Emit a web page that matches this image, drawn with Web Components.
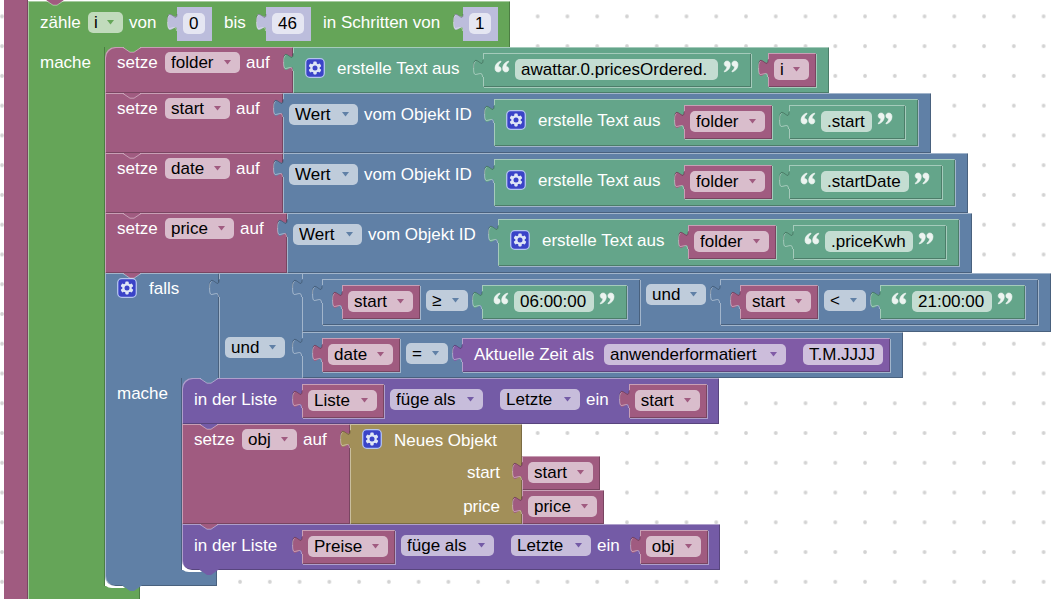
<!DOCTYPE html>
<html lang="de">
<head>
<meta charset="utf-8">
<title>Blockeditor</title>
<style>
  :root {
    --loop: #65a558; --variable: #a05b80; --text: #64a58a; --logic: #6080a6;
    --list: #745ba6; --time: #805ba6; --object: #a28f59; --number: #bcbddc;
    --light: rgba(255,255,255,.42); --dark: rgba(0,0,0,.24);
  }
  html, body { margin: 0; height: 100%; overflow: hidden; background: #fff; }
  body { font: 17px/21px "Liberation Sans", Arial, sans-serif; color: #fff; }

  /* horizontal rhythm between the parts of a block */
  bl-label, bl-select, bl-field, bl-quote { margin-left: 6px; }
  bl-gear { margin-left: 12px; }
  bl-label:first-child, bl-quote:first-child, bl-gear + bl-label, bl-value + bl-label { margin-left: 12px; }
  bl-value { margin-left: 20px; }
  bl-select + bl-value { margin-left: 14px; }
  bl-value + bl-value { margin-left: 17px; }
  bl-value[slot] { margin-left: 0; }
  .apart { margin-left: 17px; }

  /* shared widths */
  .w22 { --w: 22px; } .w25 { --w: 25px; } .w28 { --w: 28px; } .w32 { --w: 32px; }
  .w35 { --w: 35px; } .w42 { --w: 42px; } .w48 { --w: 48px; } .w51 { --w: 51px; }
  .w55 { --w: 55px; } .w60 { --w: 60px; } .w65 { --w: 65px; } .w69 { --w: 69px; }
  .w75 { --w: 75px; } .w80 { --w: 80px; } .w88 { --w: 88px; } .w93 { --w: 93px; }
  .w106 { --w: 106px; } .w110 { --w: 110px; } .w120 { --w: 120px; } .w124 { --w: 124px; }
  .w126 { --w: 126px; } .w182 { --w: 182px; } .w203 { --w: 203px; }
  .second { grid-row: 2; }
  .key { grid-column: 2; margin-top: 6px; }
</style>
</head>
<body>
<bl-workspace>
  <bl-rail color="variable">
    <bl-loop color="loop" after="variable" last>
      <bl-label class="w42">zähle</bl-label>
      <bl-select class="w35" value="i"></bl-select>
      <bl-label class="w28">von</bl-label>
      <bl-value color="number"><bl-field class="w22" value="0"></bl-field></bl-value>
      <bl-label class="w22">bis</bl-label>
      <bl-value color="number"><bl-field class="w32" value="46"></bl-field></bl-value>
      <bl-label class="w120">in Schritten von</bl-label>
      <bl-value color="number"><bl-field class="w22" value="1"></bl-field></bl-value>
      <bl-label slot="do">mache</bl-label>

      <bl-statement slot="body" color="variable" after="loop" first>
        <bl-label class="w42">setze</bl-label><bl-select class="w75" value="folder"></bl-select><bl-label class="w25">auf</bl-label>
        <bl-value slot="value" color="text" inline>
          <bl-gear></bl-gear><bl-label class="w126">erstelle Text aus</bl-label>
          <bl-value color="text" quoted nested><bl-quote></bl-quote><bl-field class="w203" value="awattar.0.pricesOrdered."></bl-field><bl-quote closing></bl-quote></bl-value>
          <bl-value color="variable" nested><bl-select class="w35" value="i"></bl-select></bl-value>
        </bl-value>
      </bl-statement>

      <bl-statement slot="body" color="variable" after="variable">
        <bl-label class="w42">setze</bl-label><bl-select class="w65" value="start"></bl-select><bl-label class="w25">auf</bl-label>
        <bl-value slot="value" color="logic" inline tall>
          <bl-select class="w69" value="Wert"></bl-select><bl-label class="w110">vom Objekt ID</bl-label>
          <bl-value color="text" inline tall nested>
            <bl-gear></bl-gear><bl-label class="w126">erstelle Text aus</bl-label>
            <bl-value color="variable" nested><bl-select class="w75" value="folder"></bl-select></bl-value>
            <bl-value color="text" quoted nested><bl-quote></bl-quote><bl-field class="w51" value=".start"></bl-field><bl-quote closing></bl-quote></bl-value>
          </bl-value>
        </bl-value>
      </bl-statement>

      <bl-statement slot="body" color="variable" after="variable">
        <bl-label class="w42">setze</bl-label><bl-select class="w65" value="date"></bl-select><bl-label class="w25">auf</bl-label>
        <bl-value slot="value" color="logic" inline tall>
          <bl-select class="w69" value="Wert"></bl-select><bl-label class="w110">vom Objekt ID</bl-label>
          <bl-value color="text" inline tall nested>
            <bl-gear></bl-gear><bl-label class="w126">erstelle Text aus</bl-label>
            <bl-value color="variable" nested><bl-select class="w75" value="folder"></bl-select></bl-value>
            <bl-value color="text" quoted nested><bl-quote></bl-quote><bl-field class="w88" value=".startDate"></bl-field><bl-quote closing></bl-quote></bl-value>
          </bl-value>
        </bl-value>
      </bl-statement>

      <bl-statement slot="body" color="variable" after="variable">
        <bl-label class="w42">setze</bl-label><bl-select class="w69" value="price"></bl-select><bl-label class="w25">auf</bl-label>
        <bl-value slot="value" color="logic" inline tall>
          <bl-select class="w69" value="Wert"></bl-select><bl-label class="w110">vom Objekt ID</bl-label>
          <bl-value color="text" inline tall nested>
            <bl-gear></bl-gear><bl-label class="w126">erstelle Text aus</bl-label>
            <bl-value color="variable" nested><bl-select class="w75" value="folder"></bl-select></bl-value>
            <bl-value color="text" quoted nested><bl-quote></bl-quote><bl-field class="w88" value=".priceKwh"></bl-field><bl-quote closing></bl-quote></bl-value>
          </bl-value>
        </bl-value>
      </bl-statement>

      <bl-loop slot="body" color="logic" after="variable" external last>
        <bl-gear></bl-gear><bl-label class="w48">falls</bl-label>
        <bl-value slot="value" color="logic" join>
          <bl-select class="w60 second" value="und"></bl-select>
          <bl-value slot="input" color="logic" inline tall>
            <bl-value color="logic" inline nested>
              <bl-value color="variable" nested><bl-select class="w65" value="start"></bl-select></bl-value>
              <bl-select class="w42" value="≥"></bl-select>
              <bl-value color="text" quoted nested><bl-quote></bl-quote><bl-field class="w80" value="06:00:00"></bl-field><bl-quote closing></bl-quote></bl-value>
            </bl-value>
            <bl-select class="w60" value="und"></bl-select>
            <bl-value color="logic" inline nested>
              <bl-value color="variable" nested><bl-select class="w65" value="start"></bl-select></bl-value>
              <bl-select class="w42" value="&lt;"></bl-select>
              <bl-value color="text" quoted nested><bl-quote></bl-quote><bl-field class="w80" value="21:00:00"></bl-field><bl-quote closing></bl-quote></bl-value>
            </bl-value>
          </bl-value>
          <bl-value slot="input" color="logic" inline>
            <bl-value color="variable" nested><bl-select class="w65" value="date"></bl-select></bl-value>
            <bl-select class="w42" value="="></bl-select>
            <bl-value color="time" nested>
              <bl-label class="w124">Aktuelle Zeit als</bl-label><bl-select class="w182" value="anwenderformatiert"></bl-select><bl-field class="w80 apart" value="T.M.JJJJ"></bl-field>
            </bl-value>
          </bl-value>
        </bl-value>
        <bl-label slot="do">mache</bl-label>

        <bl-statement slot="body" color="list" after="logic" inline first>
          <bl-label class="w88">in der Liste</bl-label>
          <bl-value color="variable" nested><bl-select class="w69" value="Liste"></bl-select></bl-value>
          <bl-select class="w93" value="füge als"></bl-select><bl-select class="w80 apart" value="Letzte"></bl-select>
          <bl-label>ein</bl-label>
          <bl-value color="variable" nested><bl-select class="w65" value="start"></bl-select></bl-value>
        </bl-statement>

        <bl-statement slot="body" color="variable" after="list">
          <bl-label class="w42">setze</bl-label><bl-select class="w55" value="obj"></bl-select><bl-label class="w25">auf</bl-label>
          <bl-value slot="value" color="object" rows>
            <bl-gear></bl-gear><bl-label class="w106 key">Neues Objekt</bl-label>
            <bl-label class="key">start</bl-label>
            <bl-label class="key">price</bl-label>
            <bl-value slot="input" color="variable"><bl-select class="w65" value="start"></bl-select></bl-value>
            <bl-value slot="input" color="variable"><bl-select class="w69" value="price"></bl-select></bl-value>
          </bl-value>
        </bl-statement>

        <bl-statement slot="body" color="list" after="variable" inline last>
          <bl-label class="w88">in der Liste</bl-label>
          <bl-value color="variable" nested><bl-select class="w80" value="Preise"></bl-select></bl-value>
          <bl-select class="w93" value="füge als"></bl-select><bl-select class="w80 apart" value="Letzte"></bl-select>
          <bl-label>ein</bl-label>
          <bl-value color="variable" nested><bl-select class="w55" value="obj"></bl-select></bl-value>
        </bl-statement>
      </bl-loop>
    </bl-loop>
  </bl-rail>
</bl-workspace>

<script>
const COLORS = ['loop', 'variable', 'text', 'logic', 'list', 'time', 'object', 'number'];
const colorRules = COLORS.map(c =>
  `:host([color=${c}]){--c:var(--${c})} :host([after=${c}]){--above:var(--${c})}`).join('');

const baseRules = `
  * { box-sizing: border-box; }
  :host { position: relative; box-sizing: border-box; }
  .main {
    display: flex; align-items: flex-start; background: var(--c);
    box-shadow: inset 1px 1px var(--light), inset -1px -1px var(--dark);
  }
  svg { display: block; }
  .notch { position: absolute; z-index: 2; top: 0; left: 17px; width: 20px; height: 6px; fill: var(--above); }
  .bump { position: absolute; z-index: 2; top: 100%; left: 17px; width: 20px; height: 6px; margin-top: -1px; fill: var(--c); }
  .corner { position: absolute; z-index: 1; top: 100%; left: 0; width: 20px; height: 2px; fill: #fff; }
  path.edge { fill: none; stroke: rgba(255,255,255,.42); }
`;

const NOTCH = `<svg class="notch" viewBox="0 0 20 6" aria-hidden="true"><path d="M1 0L8 5H12L19 0Z"/><path class="edge" d="M1 .5L8 5.2H12L19 .5"/></svg>`;
const LOWER = `<svg class="corner" viewBox="0 0 20 2" aria-hidden="true"><path d="M1 0H18L20 2H7Q3 2 1 0Z"/></svg>
  <svg class="bump" viewBox="0 0 20 6" aria-hidden="true"><path d="M0 0H20L19 1L12 6H8L1 1Z"/></svg>`;

class Part extends HTMLElement {
  render(css, html) {
    if (this.shadowRoot) return;
    this.attachShadow({ mode: 'open' }).innerHTML = `<style>${baseRules}${colorRules}${css}</style>${html}`;
  }
}

/* white canvas with a dotted grid */
customElements.define('bl-workspace', class extends Part {
  connectedCallback() {
    this.render(`
      :host { display: block; height: 100%; overflow: hidden; padding-left: 4px; }
      .dots { position: absolute; inset: 0; width: 100%; height: 100%; }
    `, `<svg class="dots" aria-hidden="true">
        <defs><pattern id="grid" width="29.76" height="29.76" x="-12.9" y="1.5" patternUnits="userSpaceOnUse">
          <circle cx="14.9" cy="14.9" r="1.9" fill="#d2d2d2"/></pattern></defs>
        <rect width="100%" height="100%" fill="url(#grid)"/></svg><slot></slot>`);
  }
});

/* left arm of an enclosing block that continues beyond the view */
customElements.define('bl-rail', class extends Part {
  connectedCallback() {
    this.render(`
      :host { display: flex; align-items: flex-start; min-height: 100%; }
      .arm { width: 24px; align-self: stretch; background: var(--c); box-shadow: inset -1px 0 var(--dark); }
    `, `<div class="arm"></div><slot></slot>`);
  }
});

/* block with a header, an indented statement stack and a foot */
customElements.define('bl-loop', class extends Part {
  connectedCallback() {
    this.render(`
      :host { display: block; width: max-content; }
      :host(:not([external])) { padding-top: 1px; }
      .head { display: flex; width: max-content; }
      .main { min-height: 46px; padding: 6px 12px 6px 0; box-shadow: inset 1px 1px var(--light), inset -1px 0 var(--dark); }
      :host([external]) .main { padding: 0 22px 0 0; }
      .body { display: flex; }
      .arm { min-width: 77px; background: var(--c); display: flex; align-items: flex-start; box-shadow: inset 1px 0 var(--light), inset -1px 0 var(--dark); }
      .stack { display: flex; flex-direction: column; align-items: flex-start; position: relative; z-index: 1; }
      .foot { position: relative; width: 112px; height: 16px; background: var(--c); box-shadow: inset 1px 0 var(--light), inset -1px -1px var(--dark); }
      :host([external]) .foot { border-bottom-left-radius: 10px; }
    `, `${NOTCH}<div class="head"><div class="main"><slot></slot></div><slot name="value"></slot></div>
        <div class="body"><div class="arm"><slot name="do"></slot></div><div class="stack"><slot name="body"></slot></div></div>
        <div class="foot"></div>${this.hasAttribute('last') ? LOWER : ''}`);
  }
});

/* one statement, optionally with a value block plugged into its right edge */
customElements.define('bl-statement', class extends Part {
  connectedCallback() {
    this.render(`
      :host { display: flex; }
      .main { padding-right: 22px; }
      :host([inline]) .main { padding: 6px 12px 6px 0; }
      :host([first]) .main { border-top-left-radius: 10px; }
      :host([last]) .main { border-bottom-left-radius: 10px; }
      :host([first])::before { content: ""; position: absolute; z-index: -1; top: 0; left: 0; width: 10px; height: 10px; background: var(--above); }
    `, `${NOTCH}<div class="main"><slot></slot></div><slot name="value"></slot>${this.hasAttribute('last') ? LOWER : ''}`);
  }
});

/* value block with a puzzle tab on its left edge */
customElements.define('bl-value', class extends Part {
  connectedCallback() {
    this.render(`
      :host { display: flex; }
      .main { min-height: 34px; padding: 1px 7px 0 0; }
      .tab { position: absolute; z-index: 1; left: -10px; top: 6px; width: 12px; height: 18px; fill: var(--c); overflow: visible; }
      .tab .lit { fill: none; stroke: var(--light); stroke-width: 1; }
      .tab .shade { fill: none; stroke: var(--dark); stroke-width: 1; }
      :host([nested]) { box-shadow: 1px 1px var(--light); }
      :host([quoted]) .main { padding-right: 13px; }
      :host([inline]) .main { padding: 6px 13px 6px 0; }
      :host([inline][tall]) .main { padding-bottom: 7px; }
      :host([color=number]) .main { box-shadow: none; }
      :host([join]) .main { display: grid; grid-template: 59px 46px / 83px; justify-items: start; padding: 0; box-shadow: inset 1px 1px var(--light); }
      :host([rows]) .main { display: grid; grid-template: 32px 34px 34px / 32px 118px; padding: 0 22px 0 0; justify-items: end; }
      :host([rows]) .stack { padding-top: 32px; }
      .stack { display: flex; flex-direction: column; align-items: flex-start; }
    `, `<div class="main"><slot></slot></div><div class="stack"><slot name="input"></slot></div>
        <svg class="tab" viewBox="0 0 12 18" aria-hidden="true">
          <path d="M12 0H10C10 12 .5 -9.500 .5 9S10 6 10 18H12Z"/>
          <path class="shade" d="M10 1C10 12 .5 -9 .5 9"/>
          <path class="lit" d="M2.500 2.500C.6 4 .6 6 .6 9C.6 13 1 15.500 2.500 15.500C6 15.200 9.500 12.500 9.500 18"/>
        </svg>`);
  }
});

customElements.define('bl-label', class extends Part {
  connectedCallback() {
    this.render(`:host { display: block; min-width: var(--w, 0); margin-top: 5px; white-space: nowrap; }`, `<slot></slot>`);
  }
});

customElements.define('bl-select', class extends Part {
  connectedCallback() {
    const value = this.getAttribute('value');
    this.render(`
      :host { display: block; margin-top: 5px; }
      select {
        display: block; appearance: none; min-width: var(--w, 0); height: 21px; margin: 0; padding: 0 25px 0 6px;
        border: 0; border-radius: 5px; background: rgba(255,255,255,.6); color: #000; font: inherit; outline: none;
      }
      svg { position: absolute; right: 9px; top: 8px; width: 7px; height: 5px; fill: var(--c); pointer-events: none; }
    `, `<select aria-label="Auswahl"><option></option></select>
        <svg viewBox="0 0 7 5" aria-hidden="true"><path d="M0 0H7L3.500 4.500Z"/></svg>`);
    this.shadowRoot.querySelector('option').textContent = value;
  }
});

customElements.define('bl-field', class extends Part {
  connectedCallback() {
    this.render(`
      :host { display: block; margin-top: 5px; }
      input {
        display: block; width: var(--w); height: 21px; margin: 0; padding: 0 6px;
        border: 0; border-radius: 5px; background: rgba(255,255,255,.62); color: #000; font: inherit; outline: none;
      }
    `, `<input type="text" aria-label="Wert">`);
    this.shadowRoot.querySelector('input').value = this.getAttribute('value');
  }
});

customElements.define('bl-quote', class extends Part {
  connectedCallback() {
    const turn = this.hasAttribute('closing') ? ' transform="rotate(180 7 5.500)"' : '';
    this.render(`
      :host { display: block; margin-top: 7px; }
      svg { width: 14px; height: 11px; fill: #fff; stroke: #fff; stroke-width: .6; opacity: .88; overflow: visible; }
    `, `<svg viewBox="0 0 14 11" aria-hidden="true"><g${turn}>
        <path d="M5.800 0C2.200 1.200 0 4 0 7.300C0 9.600 1.300 11 3.200 11C4.900 11 6.100 9.800 6.100 8.200C6.100 6.600 5 5.600 3.500 5.600C3.400 3.700 4.200 2.100 6.100 .900Z"/>
        <path d="M13.500 0C9.900 1.200 7.700 4 7.700 7.300C7.700 9.600 9 11 10.900 11C12.600 11 13.800 9.800 13.800 8.200C13.800 6.600 12.700 5.600 11.200 5.600C11.100 3.700 11.900 2.100 13.800 .900Z"/>
      </g></svg>`);
  }
});

customElements.define('bl-gear', class extends Part {
  connectedCallback() {
    const teeth = [0, 60, 120].map(a => `<rect x="8.300" y="3.600" width="3.400" height="12.800" rx=".8" transform="rotate(${a} 10 10)"/>`).join('');
    this.render(`
      :host { display: block; margin-top: 5px; }
      button { display: block; width: 20px; height: 20px; margin: 0; padding: 0; border: 0; background: none; }
      svg { width: 20px; height: 20px; }
    `, `<button type="button" aria-label="Einstellungen"><svg viewBox="0 0 20 20" aria-hidden="true">
        <rect x=".7" y=".7" width="18.600" height="18.600" rx="4" fill="#3a43c8" stroke="#b4c4ee" stroke-width="1.300"/>
        <g fill="#dfe6f6">${teeth}<circle cx="10" cy="10" r="4.700"/></g><circle cx="10" cy="10" r="2.500" fill="#3a43c8"/></svg></button>`);
  }
});
</script>
</body>
</html>
